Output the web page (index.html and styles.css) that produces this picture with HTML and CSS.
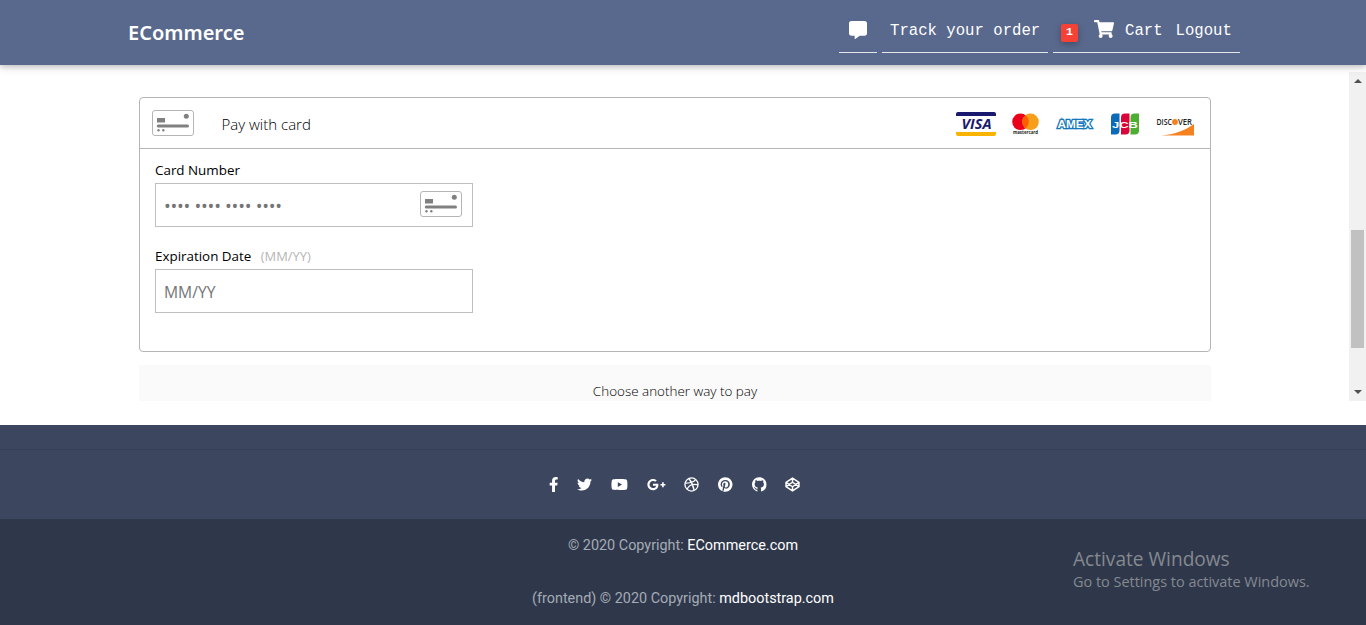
FILE: index.html
```
<!DOCTYPE html>
<html lang="en">
<head>
<meta charset="utf-8">
<title>ECommerce</title>
<link rel="stylesheet" href="styles.css">
</head>
<body>
<header class="navbar">
  <a class="brand">ECommerce</a>
  <nav class="nav-items">
    <a class="nav-item nav-chat"><svg width="18" height="18" viewBox="0 0 512 512" fill="#fff"><path d="M448 0H64C28.700 0 0 28.700 0 64v288c0 35.300 28.700 64 64 64h96v84c0 9.800 11.200 15.500 19.100 9.700L304 416h144c35.300 0 64-28.700 64-64V64c0-35.300-28.700-64-64-64z"/></svg></a>
    <a class="nav-item nav-track">Track your order</a>
    <a class="nav-item nav-cart"><span class="badge">1</span><svg class="cart-icon" width="20" height="18" viewBox="0 0 576 512" fill="#fff"><path d="M528.12 301.319l47.273-208C578.806 78.301 567.391 64 551.99 64H159.208l-9.166-44.81C147.758 8.021 137.93 0 126.529 0H24C10.745 0 0 10.745 0 24v16c0 13.255 10.745 24 24 24h69.883l70.248 343.435C147.325 417.1 136 435.222 136 456c0 30.928 25.072 56 56 56s56-25.072 56-56c0-15.674-6.447-29.835-16.824-40h209.647C430.447 426.165 424 440.326 424 456c0 30.928 25.072 56 56 56s56-25.072 56-56c0-22.172-12.888-41.332-31.579-50.405l5.517-24.276c3.413-15.018-8.002-29.319-23.403-29.319H218.117l-6.545-32h293.145c11.206 0 20.92-7.754 23.403-18.681z"/></svg><span class="cart-label">Cart</span><span>Logout</span></a>
  </nav>
</header>

<main class="scroller">
  <div class="content">
    <section class="sheet">
      <div class="sheet-head">
        <svg class="card-icon" width="42" height="26" viewBox="0 0 42 26"><use href="#card"/></svg>
        <h2 class="sheet-title">Pay with card</h2>
        <div class="brands">
          <svg width="40" height="24" viewBox="0 0 40 24"><path fill="#191970" d="M2 0h36a2 2 0 0 1 2 2v2H0V2a2 2 0 0 1 2-2z"/><path fill="#f8b400" d="M0 20h40v2a2 2 0 0 1-2 2H2a2 2 0 0 1-2-2z"/><text class="visa" x="5.500" y="17.300" textLength="30" lengthAdjust="spacingAndGlyphs">VISA</text></svg>
          <svg width="28" height="24" viewBox="0 0 28 24"><circle cx="8.500" cy="9.800" r="8.300" fill="#eb001b"/><circle cx="18.500" cy="9.800" r="8.300" fill="#f79e1b"/><path fill="#ff5f00" d="M13.500 3.200a8.300 8.300 0 0 1 0 13.200a8.300 8.300 0 0 1 0-13.200z"/><text class="mc" x="1" y="22.300" textLength="25" lengthAdjust="spacingAndGlyphs">mastercard</text></svg>
          <svg class="brand-amex" width="38" height="24" viewBox="0 0 38 24"><text class="amex" x="1.500" y="15.800" textLength="34" lengthAdjust="spacingAndGlyphs">AMEX</text></svg>
          <svg class="brand-jcb" width="28" height="22" viewBox="0 0 28 22"><path fill="#0b6bb8" d="M4 .500h4.500v17a4 4 0 0 1-4 4H0v-17a4 4 0 0 1 4-4z"/><path fill="#d9063b" d="M14 .500h4.500v17a4 4 0 0 1-4 4H10v-17a4 4 0 0 1 4-4z"/><path fill="#4cae32" d="M23.500 .500H28v17a4 4 0 0 1-4 4h-4.500v-17a4 4 0 0 1 4-4z"/><text class="jcb" x="1" y="14.500" textLength="26" lengthAdjust="spacingAndGlyphs">JCB</text></svg>
          <svg width="38" height="24" viewBox="0 0 38 24"><path fill="#f58220" d="M38 12v11.500H5C18 22.500 29 18.500 38 12z"/><text class="disc" x=".5" y="12.800" textLength="15.500" lengthAdjust="spacingAndGlyphs">DISC</text><circle cx="19" cy="10" r="2.900" fill="#f58220"/><text class="disc" x="22" y="12.800" textLength="14" lengthAdjust="spacingAndGlyphs">VER</text></svg>
        </div>
      </div>
      <div class="sheet-body">
        <div class="label">Card Number</div>
        <div class="field"><span class="dots">•••• •••• •••• ••••</span>
          <svg width="42" height="26" viewBox="0 0 42 26"><g id="card"><rect x=".5" y=".5" width="41" height="25" rx="2.500" fill="#fff" stroke="#b5b5b5"/><rect x="5" y="8" width="8" height="4.500" fill="#808080"/><circle cx="34.300" cy="6.300" r="2.500" fill="#808080"/><rect x="4.800" y="14.500" width="32.200" height="3" rx="1.500" fill="#808080"/><circle cx="6.500" cy="20.300" r="1.200" fill="#808080"/><circle cx="11.300" cy="20.300" r="1.200" fill="#808080"/></g></svg>
        </div>
        <div class="label label-date">Expiration Date <span class="hint">(MM/YY)</span></div>
        <div class="field"><span class="placeholder">MM/YY</span></div>
      </div>
    </section>
    <div class="other-way"><span>Choose another way to pay</span></div>
  </div>
  <div class="scrollbar"><i class="arrow arrow-up"></i><i class="thumb"></i><i class="arrow arrow-down"></i></div>
</main>

<footer class="footer">
  <div class="social">
    <svg width="9.400" height="15" viewBox="0 0 320 512"><path d="M279.14 288l14.22-92.66h-88.91v-60.13c0-25.35 12.42-50.06 52.24-50.06h40.42V6.26S260.43 0 225.36 0c-73.22 0-121.08 44.38-121.08 124.72v70.62H22.89V288h81.39v224h100.17V288z"/></svg>
    <svg width="15" height="15" viewBox="0 0 512 512"><path d="M459.37 151.716c.325 4.548.325 9.097.325 13.645 0 138.72-105.583 298.558-298.558 298.558-59.452 0-114.68-17.219-161.137-47.106 8.447.974 16.568 1.299 25.34 1.299 49.055 0 94.213-16.568 130.274-44.832-46.132-.975-84.792-31.188-98.112-72.772 6.498.974 12.995 1.624 19.818 1.624 9.421 0 18.843-1.3 27.614-3.573-48.081-9.747-84.143-51.98-84.143-102.985v-1.299c13.969 7.797 30.214 12.67 47.431 13.319-28.264-18.843-46.781-51.005-46.781-87.391 0-19.492 5.197-37.36 14.294-52.954 51.655 63.675 129.3 105.258 216.365 109.807-1.624-7.797-2.599-15.918-2.599-24.04 0-57.828 46.782-104.934 104.934-104.934 30.213 0 57.502 12.67 76.67 33.137 23.715-4.548 46.456-13.32 66.599-25.34-7.798 24.366-24.366 44.833-46.132 57.827 21.117-2.273 41.584-8.122 60.426-16.243-14.292 20.791-32.161 39.308-52.628 54.253z"/></svg>
    <svg width="16.900" height="15" viewBox="0 0 576 512"><path d="M549.655 124.083c-6.281-23.65-24.787-42.276-48.284-48.597C458.781 64 288 64 288 64S117.22 64 74.629 75.486c-23.497 6.322-42.003 24.947-48.284 48.597-11.412 42.867-11.412 132.305-11.412 132.305s0 89.438 11.412 132.305c6.281 23.65 24.787 41.5 48.284 47.821C117.22 448 288 448 288 448s170.78 0 213.371-11.486c23.497-6.321 42.003-24.171 48.284-47.821 11.412-42.867 11.412-132.305 11.412-132.305s0-89.438-11.412-132.305zm-317.51 213.508V175.185l142.739 81.205-142.739 81.201z"/></svg>
    <svg width="18.750" height="15" viewBox="0 0 640 512"><path d="M386.061 228.496c1.834 9.692 3.143 19.384 3.143 31.956C389.204 370.205 315.599 448 204.8 448c-106.084 0-192-85.915-192-192s85.916-192 192-192c51.864 0 95.083 18.859 128.611 50.292l-52.126 50.03c-14.145-13.621-39.028-29.599-76.485-29.599-65.484 0-118.92 54.221-118.92 121.277 0 67.056 53.436 121.277 118.92 121.277 75.961 0 104.513-54.745 108.965-82.773H204.8v-66.009h181.261zm185.406 6.437V179.2h-56.001v55.733h-55.733v56.001h55.733v55.733h56.001v-55.733H627.2v-56.001h-55.733z"/></svg>
    <svg class="line" width="15" height="15" viewBox="0 0 16 16"><circle cx="8" cy="8" r="7"/><path d="M5.200 1.600C7.800 4.800 9.800 9 10.800 14.300M1.200 6.600c4.500 0 8.600-.7 11.300-3.800M3.200 13c2.500-4.600 6.500-6 11.700-4.500"/></svg>
    <svg width="14.500" height="15" viewBox="0 0 496 512"><path d="M496 256c0 137-111 248-248 248-25.6 0-50.2-3.9-73.4-11.1 10.1-16.5 25.2-43.5 30.8-65 3-11.6 15.4-59 15.4-59 8.1 15.4 31.7 28.5 56.8 28.5 74.8 0 128.7-68.8 128.7-154.3 0-81.9-66.9-143.2-152.9-143.2-107 0-163.9 71.8-163.9 150.1 0 36.4 19.4 81.7 50.3 96.1 4.7 2.2 7.2 1.2 8.3-3.3.8-3.4 5-20.3 6.9-28.1.6-2.5.3-4.7-1.7-7.1-10.1-12.5-18.3-35.3-18.3-56.6 0-54.7 41.4-107.6 112-107.6 60.9 0 103.6 41.5 103.6 100.9 0 67.1-33.9 113.6-78 113.6-24.3 0-42.6-20.1-36.7-44.8 7-29.5 20.5-61.3 20.5-82.6 0-19-10.2-34.9-31.4-34.9-24.9 0-44.9 25.7-44.9 60.2 0 22 7.4 36.8 7.4 36.8s-24.5 103.8-29 123.2c-5 21.4-3 51.6-.9 71.2C65.4 450.9 0 361.1 0 256 0 119 111 8 248 8s248 111 248 248z"/></svg>
    <svg width="14.500" height="15" viewBox="0 0 16 16"><path d="M8 0C3.58 0 0 3.58 0 8c0 3.54 2.29 6.53 5.47 7.59.4.07.55-.17.55-.38 0-.19-.01-.82-.01-1.49-2.01.37-2.53-.49-2.69-.94-.09-.23-.48-.94-.82-1.13-.28-.15-.68-.52-.01-.53.63-.01 1.08.58 1.23.82.72 1.21 1.87.87 2.33.66.07-.52.28-.87.51-1.07-1.78-.2-3.64-.89-3.64-3.95 0-.87.31-1.59.82-2.15-.08-.2-.36-1.02.08-2.12 0 0 .67-.21 2.2.82.64-.18 1.32-.27 2-.27.68 0 1.36.09 2 .27 1.53-1.04 2.2-.82 2.2-.82.44 1.1.16 1.92.08 2.12.51.56.82 1.27.82 2.15 0 3.07-1.87 3.75-3.65 3.95.29.25.54.73.54 1.48 0 1.07-.01 1.93-.01 2.2 0 .21.15.46.55.38A8.013 8.013 0 0016 8c0-4.42-3.58-8-8-8z"/></svg>
    <svg class="line pen" width="15" height="15" viewBox="0 0 16 16"><path d="M8 1.200l6.900 4.500v4.600L8 14.800l-6.900-4.500V5.700zM8 1.200v4.400M8 10.400v4.400M1.100 5.700L8 10.400l6.900-4.700M1.100 10.300L8 5.600l6.900 4.700"/></svg>
  </div>
  <div class="copyright">
    <p>© 2020 Copyright: <a>ECommerce.com</a></p>
    <p>(frontend) © 2020 Copyright: <a>mdbootstrap.com</a></p>
  </div>
</footer>

<aside class="watermark"><div class="wm-title">Activate Windows</div><div class="wm-text">Go to Settings to activate Windows.</div></aside>
</body>
</html>
```
FILE: styles.css
```
* { box-sizing: border-box; }
body { margin: 0; height: 625px; display: flex; flex-direction: column; overflow: hidden; background: #fff; font-family: "Open Sans", "Noto Sans", sans-serif; }
svg { display: block; flex: none; overflow: visible; }
p, h2 { margin: 0; }

.navbar { position: relative; z-index: 1; height: 65px; flex: none; display: flex; justify-content: space-between; align-items: center; padding: 0 126px 0 128px; background: #59698d; color: #fff; box-shadow: 0 2px 5px rgba(0,0,0,.16), 0 2px 10px rgba(0,0,0,.12); }
.brand { font: 600 20px/30px "Noto Sans", sans-serif; }
.nav-items { display: flex; gap: 5px; font: 15.650px/24px "Courier New", "Liberation Mono", monospace; white-space: nowrap; }
.nav-item { height: 41px; display: flex; align-items: center; border-bottom: 1px solid #e4e6ec; padding: 0 8px; }
.nav-chat { width: 38px; padding: 0 10px 5px; }
.nav-track { width: 166px; padding-bottom: 2px; }
.nav-cart { width: 187px; padding-bottom: 2px; }
.badge { width: 17px; height: 18px; margin: 3px 16px 0 0; border-radius: 2px; background: #f44336; font-size: 11.500px; font-weight: 700; line-height: 16px; text-align: center; box-shadow: 0 2px 5px rgba(0,0,0,.16), 0 2px 10px rgba(0,0,0,.12); }
.cart-icon { margin: 0 11px 4px 0; }
.cart-label { margin-right: 13px; }

.scroller { height: 329px; margin-top: 7px; flex: none; display: flex; justify-content: space-between; overflow: hidden; }
.content { width: 1072px; margin-left: 139px; padding-top: 25px; }
.sheet { height: 255px; border: 1px solid #b5b5b5; border-radius: 4px; }
.sheet-head { height: 51px; display: flex; align-items: center; border-bottom: 1px solid #b5b5b5; padding: 0 16px 0 12px; }
.card-icon { margin-right: 27.500px; }
.sheet-title { flex: 1; font-size: 15px; font-weight: 300; line-height: 24px; padding-top: 2px; }
.brands { display: flex; align-items: center; gap: 16px; padding-top: 2px; }
.brand-amex, .brand-jcb { margin-right: 1px; }
.sheet-body { padding: 11px 15px; }
.label { font-size: 13.400px; line-height: 20px; height: 23px; white-space: nowrap; }
.label-date { margin-top: 19px; }
.hint { margin-left: 6px; font-size: 12.900px; color: #b5b5b5; }
.field { width: 318px; height: 44px; border: 1px solid #bfbfbf; display: flex; align-items: center; justify-content: space-between; padding: 0 10px 3px 8px; color: #757575; }
.dots { font-size: 18px; line-height: 22px; letter-spacing: -.240px; padding-top: 5px; }
.placeholder { font-size: 15.700px; line-height: 20px; padding-top: 5px; }
.other-way { height: 50px; margin-top: 13px; background: #fafafa; text-align: center; font-size: 13.450px; font-weight: 300; line-height: 20px; padding-top: 16px; color: #000; }

.visa { font: italic 700 14px "Open Sans", sans-serif; fill: #191970; }
.mc { font: 700 5px "Open Sans", sans-serif; fill: #231f20; }
.amex { font: 700 10px "Liberation Sans", sans-serif; fill: #fff; stroke: #1478be; stroke-width: 2.400px; paint-order: stroke; }
.jcb { font: 700 9px "Liberation Sans", sans-serif; fill: #fff; }
.disc { font: 600 8px "Open Sans", sans-serif; fill: #222; }

.scrollbar { width: 17px; background: #f1f1f1; display: flex; flex-direction: column; align-items: center; }
.arrow { width: 0; height: 0; border: solid transparent; border-width: 0 4px; }
.arrow-up { margin-top: 7px; border-bottom: 4px solid #505050; }
.thumb { width: 13px; height: 118px; margin-top: 147px; background: #c1c1c1; }
.arrow-down { margin-top: 42px; border-top: 4px solid #505050; }

.footer { height: 200px; margin-top: 24px; padding-top: 24px; background: #3c465f; flex: none; font: 300 14.400px/21px Roboto, sans-serif; }
.social { height: 70px; border-top: 1px solid #363f55; display: flex; justify-content: center; align-items: center; gap: 18.900px; padding: 0 17px 1px 0; }
.social svg { fill: #fff; }
.social .line { fill: none; stroke: #fff; stroke-width: 1.400; }
.social .pen { stroke-width: 1.600; stroke-linejoin: round; }
.copyright { height: 106px; padding-top: 16px; background: #2f384b; text-align: center; color: #a5abb6; font-weight: 400; }
.copyright p + p { margin-top: 32px; }
.copyright a { color: #fff; }

/* desktop overlay above the page */
.watermark { position: absolute; z-index: 2; left: 1073px; top: 546px; color: #858990; white-space: nowrap; }
.wm-title { font-size: 19.100px; line-height: 26px; }
.wm-text { font-size: 14.450px; line-height: 20px; }
```
